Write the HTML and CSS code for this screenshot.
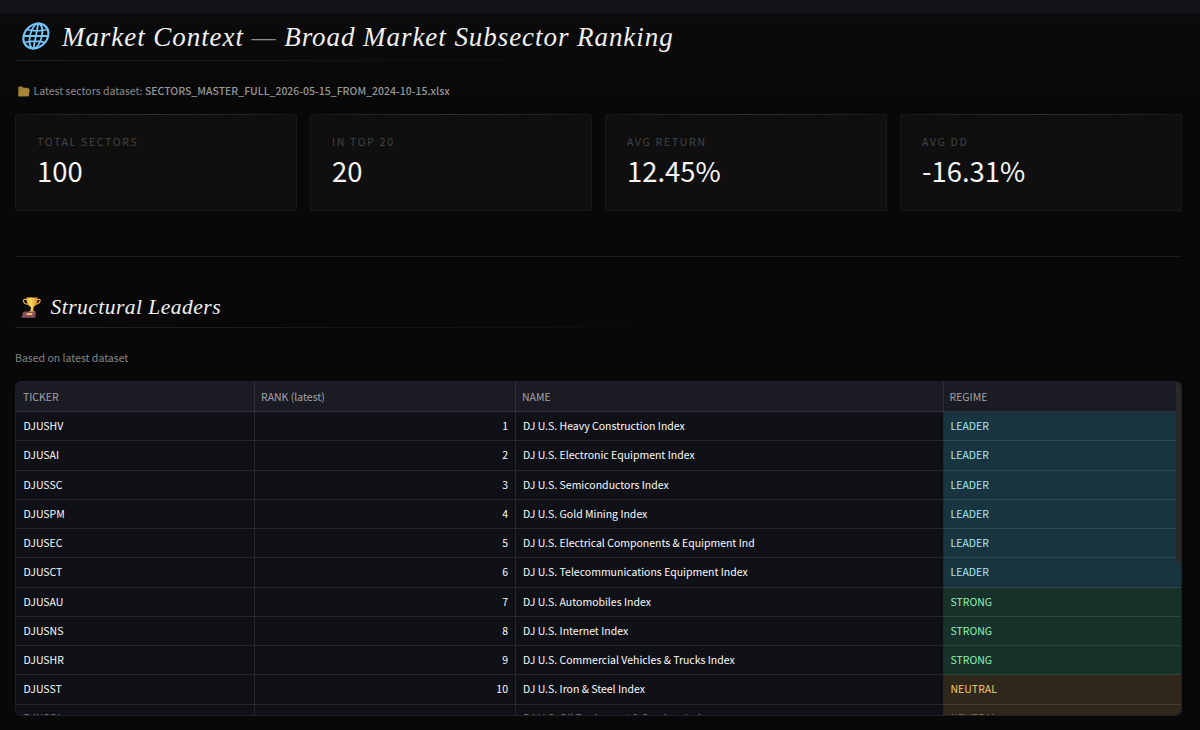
FILE: index.html
```html
<!DOCTYPE html>
<html lang="en">
<head>
<meta charset="UTF-8" />
<meta name="viewport" content="width=device-width, initial-scale=1" />
<title>Market Context</title>
<link rel="stylesheet" href="styles.css">
</head>
<body>

<div class="topbar"></div>

<main class="page">
  <h1 class="title">
    <svg class="globe" viewBox="0 0 30 30" fill="none" stroke="#74c5fa" stroke-width="1.8">
      <g transform="translate(4.2 0) skewX(-11)">
        <ellipse cx="13.6" cy="15" rx="12.3" ry="12.5" stroke-width="2.1" />
        <ellipse cx="13.6" cy="15" rx="6" ry="12.5" />
        <path d="M13.6 2.5v25M1.3 15h24.6M3.5 8.5q10.1 2.8 20.2 0M3.5 21.5q10.1-2.8 20.2 0" />
      </g>
    </svg>
    <span>Market Context <span class="dash">—</span> Broad Market Subsector Ranking</span>
  </h1>

  <p class="dataset">
    <svg class="folder" viewBox="0 0 12 11">
      <path d="M.3 1.2Q.3.4 1 .4h3.3l1.2 1.4h4.4q.8 0 .8.8v7.6H.3z" fill="#9c7c33" />
      <path d="M2.6 3.4h9.2L10.6 10.3H.4z" fill="#a9863a" />
    </svg>
    <span>Latest sectors dataset: <strong>SECTORS_MASTER_FULL_2026-05-15_FROM_2024-10-15.xlsx</strong></span>
  </p>

  <section class="metrics">
    <div class="metric">
      <div class="metric-label">TOTAL SECTORS</div>
      <div class="metric-value">100</div>
    </div>
    <div class="metric">
      <div class="metric-label">IN TOP 20</div>
      <div class="metric-value">20</div>
    </div>
    <div class="metric">
      <div class="metric-label">AVG RETURN</div>
      <div class="metric-value">12.45%</div>
    </div>
    <div class="metric">
      <div class="metric-label">AVG DD</div>
      <div class="metric-value">-16.31%</div>
    </div>
  </section>

  <hr class="divider">

  <h2 class="subtitle">
    <svg class="trophy" viewBox="0 0 20 21">
      <defs>
        <linearGradient id="gold" x1="0" x2="1">
          <stop offset="0" stop-color="#f0bb35" />
          <stop offset=".4" stop-color="#fbd45c" />
          <stop offset="1" stop-color="#d98a22" />
        </linearGradient>
      </defs>
      <path d="M6 2.8Q2 1.6 2.4 4.2 3 7 6.8 7.4M16 2.8q3.7-1.2 3.1 1.2-.9 2.8-4.6 3.4" fill="none" stroke="#e9a832" stroke-width="1.2" />
      <path d="M5.4.6h11.4q-.3 7.4-4.2 9.4l-.4 3.6 2 1.3H7.6l2-1.3.3-3.6Q5.4 8.3 5.4.6z" fill="url(#gold)" />
      <path d="M2.6 14.6h12.3l-.6 6.1H.2z" fill="#855058" />
      <path d="M5.8 16h5.8l-.4 2.1H5.3z" fill="#f3ba65" />
    </svg>
    <span>Structural Leaders</span>
  </h2>

  <p class="caption">Based on latest dataset</p>

  <div class="table-wrap">
    <table class="grid">
      <colgroup>
        <col class="col-ticker"><col class="col-rank"><col class="col-name"><col>
      </colgroup>
      <thead>
        <tr><th>TICKER</th><th>RANK (latest)</th><th>NAME</th><th>REGIME</th></tr>
      </thead>
      <tbody>
        <tr><td>DJUSHV</td><td class="num">1</td><td>DJ U.S. Heavy Construction Index</td><td class="leader">LEADER</td></tr>
        <tr><td>DJUSAI</td><td class="num">2</td><td>DJ U.S. Electronic Equipment Index</td><td class="leader">LEADER</td></tr>
        <tr><td>DJUSSC</td><td class="num">3</td><td>DJ U.S. Semiconductors Index</td><td class="leader">LEADER</td></tr>
        <tr><td>DJUSPM</td><td class="num">4</td><td>DJ U.S. Gold Mining Index</td><td class="leader">LEADER</td></tr>
        <tr><td>DJUSEC</td><td class="num">5</td><td>DJ U.S. Electrical Components &amp; Equipment Ind</td><td class="leader">LEADER</td></tr>
        <tr><td>DJUSCT</td><td class="num">6</td><td>DJ U.S. Telecommunications Equipment Index</td><td class="leader">LEADER</td></tr>
        <tr><td>DJUSAU</td><td class="num">7</td><td>DJ U.S. Automobiles Index</td><td class="strong">STRONG</td></tr>
        <tr><td>DJUSNS</td><td class="num">8</td><td>DJ U.S. Internet Index</td><td class="strong">STRONG</td></tr>
        <tr><td>DJUSHR</td><td class="num">9</td><td>DJ U.S. Commercial Vehicles &amp; Trucks Index</td><td class="strong">STRONG</td></tr>
        <tr><td>DJUSST</td><td class="num">10</td><td>DJ U.S. Iron &amp; Steel Index</td><td class="neutral">NEUTRAL</td></tr>
        <tr class="cut"><td>DJUSOI</td><td class="num"></td><td>DJ U.S. Oil Equipment &amp; Services Index</td><td class="neutral">NEUTRAL</td></tr>
      </tbody>
    </table>
    <div class="scroll-thumb"></div>
  </div>
</main>

</body>
</html>
```
FILE: styles.css
```css
* { box-sizing: border-box; }
body { margin: 0; height: 730px; overflow: hidden; background: #080808; color: #fafafa; font-family: "Noto Sans CJK SC", "Open Sans", sans-serif; }
h1, h2, p { margin: 0; font-weight: 400; }
svg { display: block; flex: none; }

.topbar { height: 13px; background: #111218; }
.page { padding: 0 18px 0 15px; background: linear-gradient(#0b0b0b, #080808 100px); }

/* Headings */
.title, .subtitle { display: flex; align-items: center; font-family: "Liberation Serif", serif; font-style: italic; color: #f0f0f0; white-space: nowrap; }
.title { height: 48px; padding: 0 0 1px 6px; font-size: 27px; letter-spacing: 0.94px; border-bottom: 1px solid; border-image: linear-gradient(90deg, #1c1c1c, transparent 60%) 1; }
.title > span { margin-left: 11px; padding-top: 2px; }
.dash { color: #8c8c8c; }
.globe { width: 30px; height: 30px; }
.subtitle { height: 41px; padding-left: 6px; font-size: 21.5px; letter-spacing: 0.48px; border-bottom: 1px solid; border-image: linear-gradient(90deg, #242424, transparent 60%) 1; }
.subtitle span { margin-left: 9.5px; }
.trophy { width: 20px; height: 21px; }

.dataset { display: flex; align-items: center; height: 18px; margin: 21px 0 14px; padding-left: 3px; font-size: 10.5px; line-height: 18px; color: #8b8b8b; }
.dataset span { margin-left: 3.5px; }
.dataset strong { font-weight: 500; color: #969696; }
.folder { width: 12px; height: 11px; }

/* Metric cards */
.metrics { display: grid; grid-template-columns: repeat(4, 1fr); gap: 13px; }
.metric { position: relative; height: 97px; padding: 19px 21px; background: #0f0f0f; border: 1px solid #181818; border-radius: 2px; }
.metric::before { content: ""; position: absolute; top: -1px; left: 0; right: 0; height: 1px; background: linear-gradient(90deg, transparent, #303030, transparent); }
.metric-label { height: 16px; line-height: 16px; font-size: 10.5px; letter-spacing: 1.7px; color: #444; }
.metric-value { margin-top: 2px; line-height: 36px; font-size: 27.4px; color: #f5f5f5; }

.divider { height: 1px; margin: 45px 0 30px; border: 0; background: #1d1d1d; }
.caption { height: 18px; margin: 21px 0 14px; line-height: 18px; font-size: 10.5px; color: #858585; }

/* Data table */
.table-wrap { position: relative; height: 335px; overflow: hidden; border: 1px solid #1f2026; border-radius: 6px; background: #101116; }
.grid { width: 100%; table-layout: fixed; border-collapse: separate; border-spacing: 0; }
.col-ticker { width: 239px; }
.col-rank { width: 261px; }
.col-name { width: 427.5px; }
.grid th, .grid td { height: 29.25px; padding: 0 7px; text-align: left; font-size: 10.5px; line-height: 16px; font-weight: 400; white-space: nowrap; border-right: 1px solid rgba(250, 250, 250, 0.1); border-bottom: 1px solid rgba(250, 250, 250, 0.1); }
.grid th { height: 30px; padding-left: 6px; color: #a3a3a9; background: #1a1b23; }
.grid th:first-child { padding-left: 7px; }
.grid td:first-child { padding-left: 7.5px; }
.grid th:last-child, .grid td:last-child { border-right: 0; }
.grid .num { text-align: right; }
.grid .leader { background: #18343f; color: #a9e9fa; }
.grid .strong { background: #18312a; color: #8cf5b4; }
.grid .neutral { background: #2f271c; color: #f5ca6a; }
.grid .cut td { padding-bottom: 1px; line-height: 14px; color: #77787c; }
.grid .cut .neutral { color: #8a7340; }
.scroll-thumb { position: absolute; top: 0; right: 0; width: 5px; height: 181px; background: #2a2a2b; border-radius: 3px; }
```
